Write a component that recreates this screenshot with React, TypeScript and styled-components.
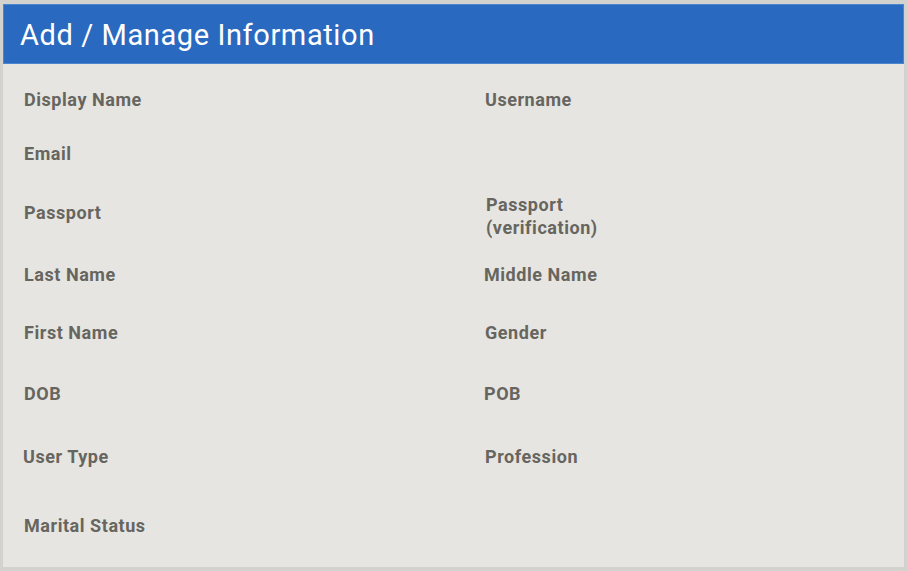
import {Fragment} from 'react'
import styled, {createGlobalStyle} from 'styled-components'

const GlobalStyle = createGlobalStyle`
    html, body {
        margin: 0;
        padding: 0;
        background: #d3d2ce;
    }
    * {
        box-sizing: border-box;
    }
`

const Card = styled.div`
    width: 907px;
    height: 571px;
    border: 3px solid #d3d2ce;
    border-top-width: 4px;
    border-bottom-width: 4px;
    border-radius: 4px;
    background: #e6e5e1;
    overflow: hidden;
    font-family: Roboto, "Liberation Sans", sans-serif;
`

const Header = styled.div`
    height: 60px;
    display: flex;
    align-items: center;
    padding-left: 16px;
    background: #2a69c0;
    border: 1px solid #4b84cf;
`

const Title = styled.h1`
    margin: 0;
    padding-top: 2px;
    font-size: 29px;
    font-weight: 400;
    color: #ffffff;
    letter-spacing: 0.6px;
`

const Grid = styled.div`
    display: grid;
    grid-template-columns: 461px 1fr;
    grid-template-rows: 54px 54px 68px 52px 64px 58px 68px 70px;
    align-items: center;
    padding: 8px 0 0 21px;
`

const Label = styled.div<{$dx?: number; $dy?: number}>`
    margin-left: ${({$dx}) => $dx ?? 0}px;
    margin-top: ${({$dy}) => $dy ?? 0}px;
    font-size: 18px;
    line-height: 23px;
    font-weight: 700;
    color: #67655f;
    letter-spacing: 0.55px;
`

type Field = {text: string; dx?: number; dy?: number}

const rows: [Field, Field][] = [
    [{text: 'Display Name'}, {text: 'Username'}],
    [{text: 'Email'}, {text: ''}],
    [{text: 'Passport', dy: -4}, {text: 'Passport\n(verification)', dx: 1, dy: 4}],
    [{text: 'Last Name'}, {text: 'Middle Name', dx: -1}],
    [{text: 'First Name'}, {text: 'Gender'}],
    [{text: 'DOB'}, {text: 'POB', dx: -1}],
    [{text: 'User Type', dx: -1}, {text: 'Profession'}],
    [{text: 'Marital Status'}, {text: ''}],
]

export default function App() {
    return (
        <>
            <GlobalStyle/>
            <Card>
                <Header>
                    <Title>Add / Manage Information</Title>
                </Header>
                <Grid>
                    {rows.map(([left, right], i) => (
                        <Fragment key={i}>
                            <Label $dx={left.dx} $dy={left.dy}>{left.text}</Label>
                            <Label $dx={right.dx} $dy={right.dy}>
                                {right.text.split('\n').map((line) => (
                                    <div key={line}>{line}</div>
                                ))}
                            </Label>
                        </Fragment>
                    ))}
                </Grid>
            </Card>
        </>
    )
}
